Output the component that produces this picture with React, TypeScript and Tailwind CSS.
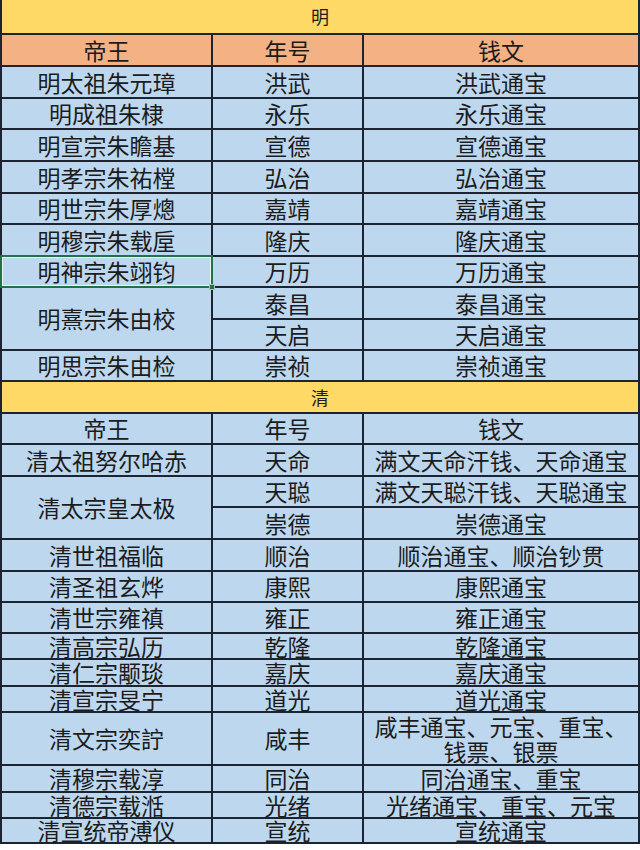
import React from "react";

type Row = { ruler?: string; span?: boolean; era: string; coin: React.ReactNode; selected?: boolean };

const ming: Row[] = [
  { ruler: "明太祖朱元璋", era: "洪武", coin: "洪武通宝" },
  { ruler: "明成祖朱棣", era: "永乐", coin: "永乐通宝" },
  { ruler: "明宣宗朱瞻基", era: "宣德", coin: "宣德通宝" },
  { ruler: "明孝宗朱祐樘", era: "弘治", coin: "弘治通宝" },
  { ruler: "明世宗朱厚熜", era: "嘉靖", coin: "嘉靖通宝" },
  { ruler: "明穆宗朱载垕", era: "隆庆", coin: "隆庆通宝" },
  { ruler: "明神宗朱翊钧", era: "万历", coin: "万历通宝", selected: true },
  { ruler: "明熹宗朱由校", span: true, era: "泰昌", coin: "泰昌通宝" },
  { era: "天启", coin: "天启通宝" },
  { ruler: "明思宗朱由检", era: "崇祯", coin: "崇祯通宝" },
];

const qing: Row[] = [
  { ruler: "清太祖努尔哈赤", era: "天命", coin: "满文天命汗钱、天命通宝" },
  { ruler: "清太宗皇太极", span: true, era: "天聪", coin: "满文天聪汗钱、天聪通宝" },
  { era: "崇德", coin: "崇德通宝" },
  { ruler: "清世祖福临", era: "顺治", coin: "顺治通宝、顺治钞贯" },
  { ruler: "清圣祖玄烨", era: "康熙", coin: "康熙通宝" },
  { ruler: "清世宗雍禛", era: "雍正", coin: "雍正通宝" },
  { ruler: "清高宗弘历", era: "乾隆", coin: "乾隆通宝" },
  { ruler: "清仁宗颙琰", era: "嘉庆", coin: "嘉庆通宝" },
  { ruler: "清宣宗旻宁", era: "道光", coin: "道光通宝" },
  {
    ruler: "清文宗奕詝",
    era: "咸丰",
    coin: (
      <span className="leading-[25px]">
        咸丰通宝、元宝、重宝、
        <br />
        钱票、银票
      </span>
    ),
  },
  { ruler: "清穆宗载淳", era: "同治", coin: "同治通宝、重宝" },
  { ruler: "清德宗载湉", era: "光绪", coin: "光绪通宝、重宝、元宝" },
  { ruler: "清宣统帝溥仪", era: "宣统", coin: "宣统通宝" },
];

const Cell = ({
  children,
  className = "",
}: {
  children?: React.ReactNode;
  className?: string;
}) => (
  <div
    className={`flex items-center justify-center text-center text-[23px] leading-none text-[#1c1c1c] bg-[#bdd7ee] ${className}`}
  >
    {children}
  </div>
);

const Title = ({ text }: { text: string }) => (
  <div className="col-span-3 flex items-center justify-center bg-[#ffd966] text-[18px] text-[#1c1c1c]">
    {text}
  </div>
);

const renderRows = (rows: Row[]) =>
  rows.map((r, i) => (
    <React.Fragment key={i}>
      {r.ruler && (
        <Cell className={`${r.span ? "row-span-2" : ""} ${r.selected ? "relative z-10" : ""}`}>
          {r.ruler}
          {r.selected && (
            <>
              <span className="absolute -left-[2px] -top-[2px] -right-[2px] -bottom-[2px] border-2 border-[#217346]" />
              <span className="absolute left-0 top-0 right-0 bottom-0 border border-white/70" />
              <span className="absolute -right-[4px] -bottom-[4px] h-[6px] w-[6px] bg-[#217346] border border-white/60" />
            </>
          )}
        </Cell>
      )}
      <Cell>{r.era}</Cell>
      <Cell>{r.coin}</Cell>
    </React.Fragment>
  ));

export default function App() {
  return (
    <div className="w-[640px] h-[850px] bg-white font-['Noto_Sans_CJK_SC','Liberation_Sans',sans-serif]">
      <div className="grid grid-cols-[209px_149px_274px] grid-rows-[33px_30px_30px_29px_30px_30px_29px_30px_29px_30px_29px_29px_30px_29px_30px_29px_30px_30px_29px_29px_24px_25px_24px_51px_25px_24px_23px] gap-[2px] px-[2px] pb-[2px] bg-[#1b2430]">
        <Title text="明" />
        <Cell className="bg-[#f4b183]">帝王</Cell>
        <Cell className="bg-[#f4b183]">年号</Cell>
        <Cell className="bg-[#f4b183]">钱文</Cell>
        {renderRows(ming)}
        <Title text="清" />
        <Cell>帝王</Cell>
        <Cell>年号</Cell>
        <Cell>钱文</Cell>
        {renderRows(qing)}
      </div>
    </div>
  );
}
